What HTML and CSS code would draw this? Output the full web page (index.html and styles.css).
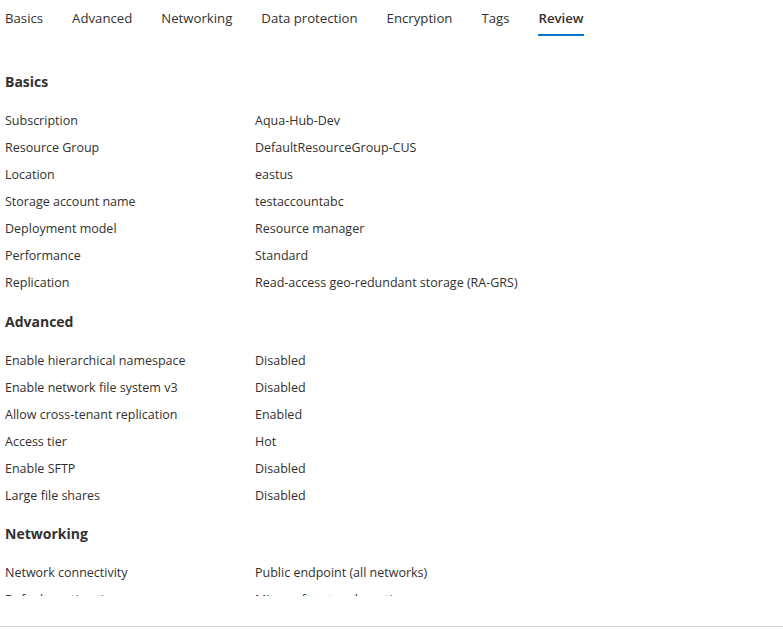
FILE: index.html
```html
<!DOCTYPE html>
<html lang="en">
<head>
<meta charset="utf-8">
<title>Review</title>
<link rel="stylesheet" href="styles.css">
</head>
<body>
<div class="page">
  <nav class="tabs">
    <span class="tab">Basics</span>
    <span class="tab">Advanced</span>
    <span class="tab">Networking</span>
    <span class="tab">Data protection</span>
    <span class="tab">Encryption</span>
    <span class="tab">Tags</span>
    <span class="tab active">Review</span>
  </nav>
  <main class="content">
    <h2 class="section-title first">Basics</h2>
    <dl class="rows">
      <dt>Subscription</dt><dd>Aqua-Hub-Dev</dd>
      <dt>Resource Group</dt><dd>DefaultResourceGroup-CUS</dd>
      <dt>Location</dt><dd>eastus</dd>
      <dt>Storage account name</dt><dd>testaccountabc</dd>
      <dt>Deployment model</dt><dd>Resource manager</dd>
      <dt>Performance</dt><dd>Standard</dd>
      <dt>Replication</dt><dd>Read-access geo-redundant storage (RA-GRS)</dd>
    </dl>
    <h2 class="section-title">Advanced</h2>
    <dl class="rows">
      <dt>Enable hierarchical namespace</dt><dd>Disabled</dd>
      <dt>Enable network file system v3</dt><dd>Disabled</dd>
      <dt>Allow cross-tenant replication</dt><dd>Enabled</dd>
      <dt>Access tier</dt><dd>Hot</dd>
      <dt>Enable SFTP</dt><dd>Disabled</dd>
      <dt>Large file shares</dt><dd>Disabled</dd>
    </dl>
    <h2 class="section-title tight">Networking</h2>
    <dl class="rows">
      <dt>Network connectivity</dt><dd>Public endpoint (all networks)</dd>
      <dt>Default routing tier</dt><dd>Microsoft network routing</dd>
    </dl>
  </main>
  <footer class="footer"></footer>
</div>
</body>
</html>
```
FILE: styles.css
```css
* { box-sizing: border-box; }
html, body {
  margin: 0;
  padding: 0;
  background: #ffffff;
}
body {
  font-family: "Open Sans", "Noto Sans", "Liberation Sans", sans-serif;
  font-size: 12.5px;
  color: #323130;
}
.page {
  width: 783px;
  height: 630px;
  display: flex;
  flex-direction: column;
  overflow: hidden;
}
.tabs {
  display: flex;
  gap: 29px;
  padding-left: 5px;
  height: 36px;
  flex: none;
}
.tab {
  height: 36px;
  font-size: 13.2px;
  border-bottom: 2px solid transparent;
  padding-top: 1px;
  line-height: 34px;
  white-space: nowrap;
}
.tab.active {
  font-weight: 600;
  border-bottom-color: #0078d4;
}
.content {
  height: 560px;
  flex: none;
  overflow: hidden;
  padding-left: 5px;
}
.section-title {
  margin: 14px 0 13px;
  height: 24px;
  line-height: 24px;
  font-size: 14px;
  font-weight: 700;
}
.section-title.first {
  margin-top: 34px;
}
.section-title.tight {
  margin-top: 13px;
}
.rows {
  display: grid;
  grid-template-columns: 250px 1fr;
  grid-auto-rows: 27px;
  margin: 0;
}
.rows dt, .rows dd {
  margin: 0;
  line-height: 27px;
  white-space: nowrap;
}
.footer {
  flex: none;
  margin-top: 30px;
  border-top: 1px solid #d1d1d1;
  height: 4px;
}
```
